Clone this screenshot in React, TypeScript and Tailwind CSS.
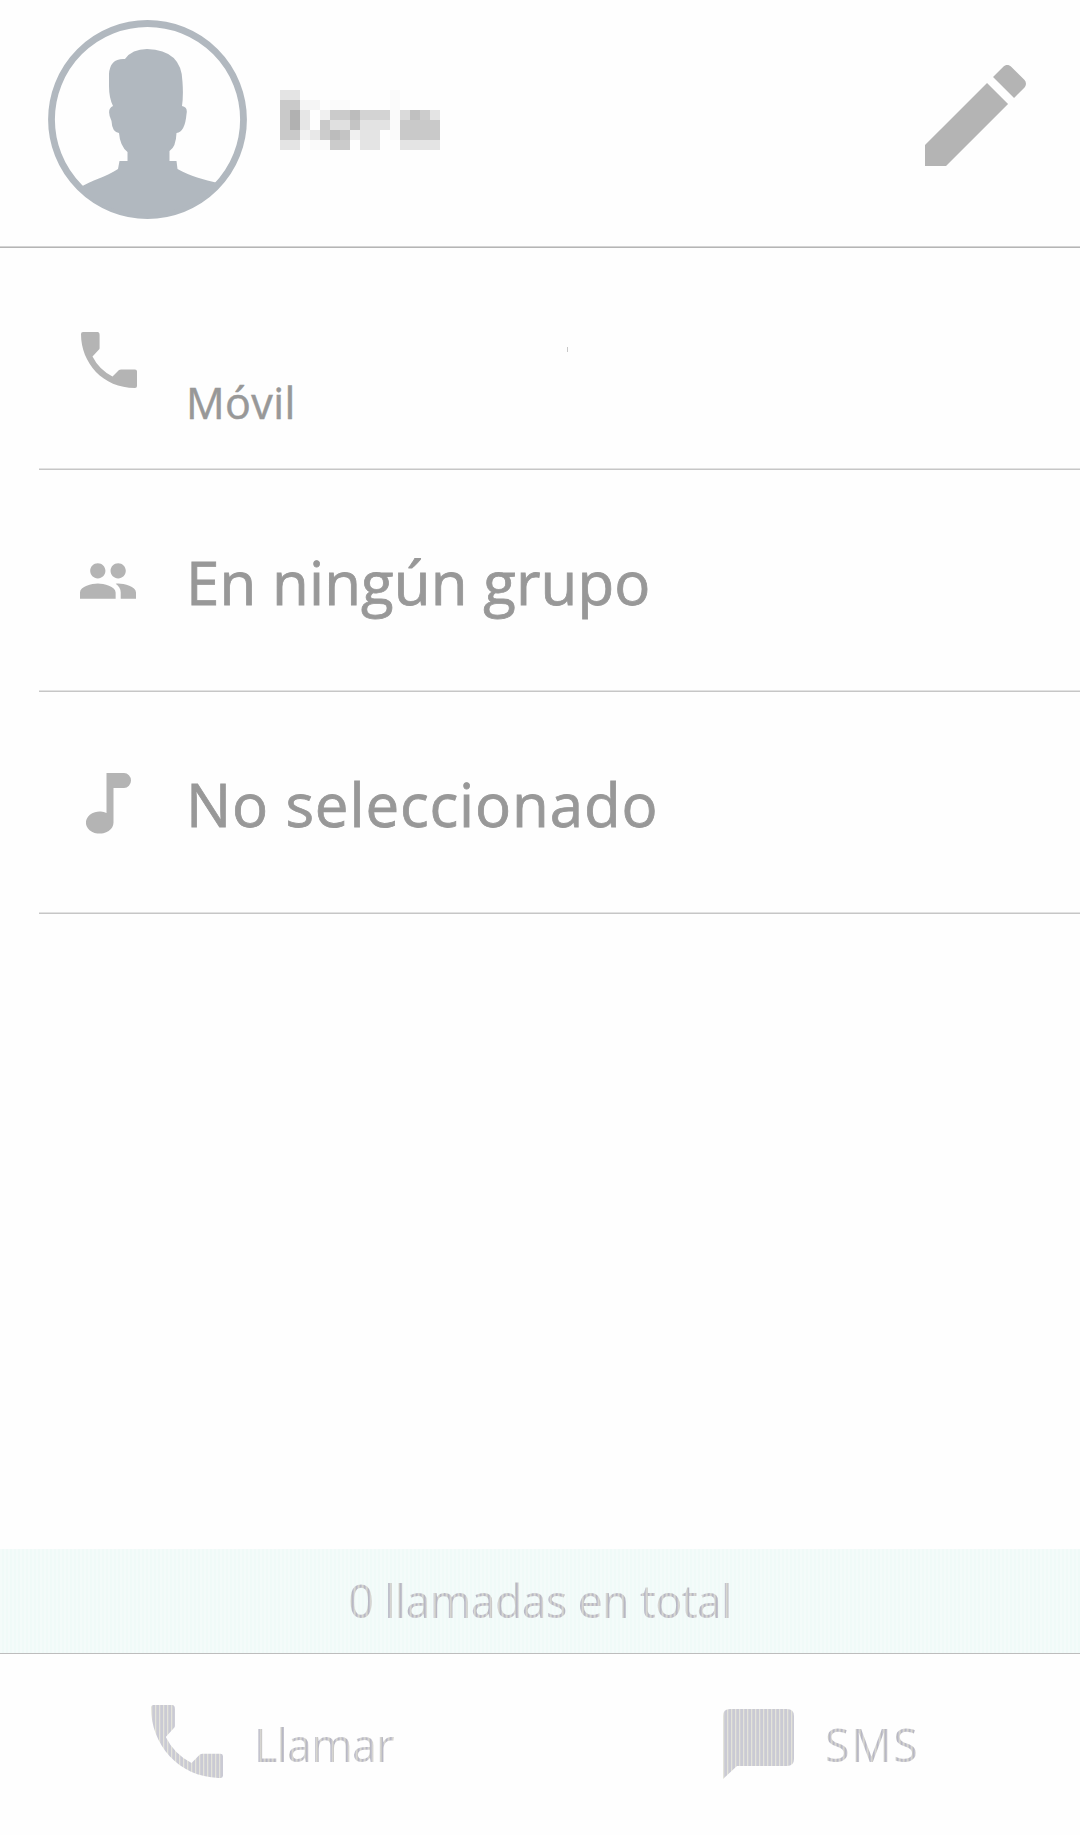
import type { ReactNode } from 'react'

const PHONE_PATH =
  'M2 0H16.500Q18.600 0 18.600 3V16Q18.600 17 18 17.500L11.500 24.500Q18 37.500 31.500 44.500L38 38Q39 37.400 40 37.400H54Q56 37.400 56 39.500V54Q56 56 54 56C22 56 0 31 0 2Q0 0 2 0Z'

// [x, y, width, color] on a 16x6 grid
const NAME_BLOCKS: [number, number, number, string][] = [
  [0, 0, 2, '#e4e4e4'],
  [11, 0, 1, '#fafafa'],
  [0, 1, 2, '#c9c9c9'],
  [2, 1, 2, '#f5f5f5'],
  [5, 1, 2, '#fafafa'],
  [11, 1, 1, '#fafafa'],
  [0, 2, 1, '#c9c9c9'],
  [1, 2, 1, '#b1b1b1'],
  [2, 2, 1, '#e6e6e6'],
  [4, 2, 1, '#f0f0f0'],
  [5, 2, 2, '#cbcbcb'],
  [7, 2, 1, '#bcbcbc'],
  [8, 2, 3, '#d3d3d3'],
  [11, 2, 1, '#fafafa'],
  [12, 2, 1, '#dadada'],
  [13, 2, 1, '#c0c0c0'],
  [14, 2, 1, '#cccccc'],
  [15, 2, 1, '#e4e4e4'],
  [0, 3, 1, '#c9c9c9'],
  [1, 3, 1, '#b1b1b1'],
  [2, 3, 1, '#e6e6e6'],
  [4, 3, 1, '#c9c9c9'],
  [5, 3, 2, '#e0e0e0'],
  [7, 3, 1, '#c4c4c4'],
  [8, 3, 3, '#e3e3e3'],
  [11, 3, 1, '#fafafa'],
  [12, 3, 4, '#c9c9c9'],
  [0, 4, 2, '#c9c9c9'],
  [2, 4, 1, '#f2f2f2'],
  [3, 4, 1, '#e8e8e8'],
  [4, 4, 1, '#cccccc'],
  [5, 4, 1, '#bcbcbc'],
  [6, 4, 1, '#c4c4c4'],
  [7, 4, 1, '#f0f0f0'],
  [8, 4, 2, '#e4e4e4'],
  [11, 4, 1, '#fafafa'],
  [12, 4, 4, '#c9c9c9'],
  [0, 5, 2, '#e4e4e4'],
  [3, 5, 2, '#fafafa'],
  [5, 5, 2, '#cbcbcb'],
  [8, 5, 2, '#e4e4e4'],
  [12, 5, 4, '#e4e4e4'],
]

const Avatar = () => (
  <svg className="w-[200px] h-[200px] shrink-0" viewBox="0 0 200 200" fill="#b1b8bf">
    <circle cx="99.500" cy="99.500" r="96" fill="none" stroke="#b1b8bf" strokeWidth="6.800" />
    <path d="M31 168C44 160 58 157 70 149L71.500 141H79.500V132Q72 126 71 113Q64 112 63.500 101Q58 89 65 86Q61 78 61 66V54Q62 38 77 39Q84 29 99 29Q134 30 134.500 62Q135.500 76 134 86Q140 87 138.500 94Q137 112 128.500 113Q128 127 121.500 131V141H128.500L129.500 149C142 156 156 160 170 163A99.300 99.300 0 0 1 31 168Z" />
  </svg>
)

const BlurredName = () => (
  <svg className="w-40 h-[60px] ml-8 mt-[70px] shrink-0" viewBox="0 0 16 6" shapeRendering="crispEdges">
    {NAME_BLOCKS.map(([x, y, w, color]) => (
      <rect key={`${x}-${y}`} x={x} y={y} width={w} height="1" fill={color} />
    ))}
  </svg>
)

const Divider = () => <div className="h-0.5 border-t border-b border-t-[#e2e2e2] border-b-[#c6c6c6]" />

interface RowProps {
  icon: ReactNode
  children: ReactNode
}

const Row = ({ icon, children }: RowProps) => (
  <div className="h-[222px] ml-[39px] flex flex-col">
    <div className="flex-1 flex">
      <div className="w-[147px] pl-[41px] shrink-0">{icon}</div>
      {children}
    </div>
    <Divider />
  </div>
)

const Stripes = ({ id }: { id: string }) => (
  <defs>
    <pattern id={id} width="4" height="4" patternUnits="userSpaceOnUse">
      <rect width="4" height="4" fill="#cacad4" />
      <rect width="1.300" height="4" fill="#e3e3da" />
    </pattern>
  </defs>
)

const stripedText =
  'text-transparent bg-clip-text bg-[repeating-linear-gradient(90deg,#b8b8c4_0px,#b8b8c4_1px,#cfcfd8_2px,#dedccb_3px,#b8b8c4_4px)]'

export default function App() {
  return (
    <main className="w-[1080px] h-[1835px] bg-[#fefefe] flex flex-col overflow-hidden font-['Open_Sans',sans-serif] text-[#989898]">
      <header className="h-[248px] flex flex-col">
        <div className="flex-1 flex items-start pl-12 pr-[54px] pt-5">
          <Avatar />
          <BlurredName />
          <svg className="w-[101px] h-[101px] ml-auto mt-[45px]" viewBox="3 2.990 18.010 18.010" fill="#b4b4b4">
            <path d="M3 17.250V21h3.750L17.810 9.940l-3.750-3.750L3 17.250zM20.710 7.040c.39-.39.39-1.020 0-1.410l-2.340-2.340c-.39-.39-1.020-.39-1.410 0l-1.830 1.830 3.750 3.750 1.830-1.830z" />
          </svg>
        </div>
        <div className="h-0.5 border-t border-b border-t-[#d4d4d4] border-b-[#b5b5b5]" />
      </header>

      <section>
        <Row
          icon={
            <svg className="w-[56px] h-[56px] mt-[84px] ml-px" viewBox="0 0 56 56" fill="#b4b4b4">
              <path d={PHONE_PATH} />
            </svg>
          }
        >
          <p className="mt-[125px] text-[43px] leading-[60px] tracking-[0.4px] [-webkit-text-stroke:0.5px_#989898]">Móvil</p>
          {/* Trace of the hidden number */}
          <div className="w-px h-[5px] mt-[99px] ml-[271px] bg-[#c8c8c8]" />
        </Row>
        <Row
          icon={
            <svg className="w-[56px] h-[36px] mt-[93px]" viewBox="1 5 22 14" fill="#b4b4b4">
              <path d="M16 11c1.660 0 2.990-1.340 2.990-3S17.660 5 16 5c-1.660 0-3 1.340-3 3s1.340 3 3 3zm-8 0c1.660 0 2.990-1.340 2.990-3S9.660 5 8 5C6.340 5 5 6.340 5 8s1.340 3 3 3zm0 2c-2.330 0-7 1.170-7 3.500V19h14v-2.500c0-2.330-4.670-3.500-7-3.500zm8 0c-.29 0-.62.020-.97.050 1.160.84 1.970 1.970 1.970 3.450V19h6v-2.500c0-2.330-4.670-3.500-7-3.500z" />
            </svg>
          }
        >
          <p className="mt-[70px] text-[60px] leading-[84px] tracking-[0.1px] [-webkit-text-stroke:0.8px_#989898]">En ningún grupo</p>
        </Row>
        <Row
          icon={
            <svg className="w-[45px] h-[61px] mt-[81px] ml-1.5" viewBox="0 0 45 61" fill="#b4b4b4">
              <path d="M20.500 0H38A7 7.500 0 0 1 38 15H27.500V49.500A13.800 11 0 1 1 20.500 40Z" />
            </svg>
          }
        >
          <p className="mt-[70px] text-[60px] leading-[84px] tracking-[0.85px] [-webkit-text-stroke:0.8px_#989898]">No seleccionado</p>
        </Row>
      </section>

      <div className="flex-1" />

      <div className="h-[105px] border-b border-[#bdbdbd] flex justify-center bg-[repeating-linear-gradient(90deg,#f4fbfa_0px,#f4fbfa_2px,#ecf9f6_3px,#f4fbfa_4px)]">
        <p className={`mt-[18px] h-[68px] text-[45px] leading-[67px] tracking-[-0.75px] whitespace-pre ${stripedText}`}>0 llamadas en total</p>
      </div>

      <footer className="h-[181px] flex">
        <button className="w-[540px] flex items-start pl-[151px]">
          <svg className="w-[72px] h-[73px] mt-[51px] shrink-0" viewBox="0 0 72 73">
            <Stripes id="call-stripes" />
            <clipPath id="call-shape">
              <path d={PHONE_PATH} transform="scale(1.286 1.304)" />
            </clipPath>
            <rect width="72" height="73" fill="url(#call-stripes)" clipPath="url(#call-shape)" />
          </svg>
          <span className={`ml-[31px] mt-[58px] h-[68px] text-[45px] leading-[66px] tracking-[-0.9px] ${stripedText}`}>Llamar</span>
        </button>
        <button className="w-[540px] flex items-start pl-[183px]">
          <svg className="w-[71px] h-[70px] mt-[55px] shrink-0" viewBox="0 0 71 70">
            <Stripes id="sms-stripes" />
            <path d="M7 0H64Q71 0 71 7V50Q71 57 64 57H14L0 70V7Q0 0 7 0Z" fill="url(#sms-stripes)" />
          </svg>
          <span className={`ml-[31px] mt-[58px] h-[68px] text-[45px] leading-[66px] tracking-[1.6px] ${stripedText}`}>SMS</span>
        </button>
      </footer>
    </main>
  )
}
